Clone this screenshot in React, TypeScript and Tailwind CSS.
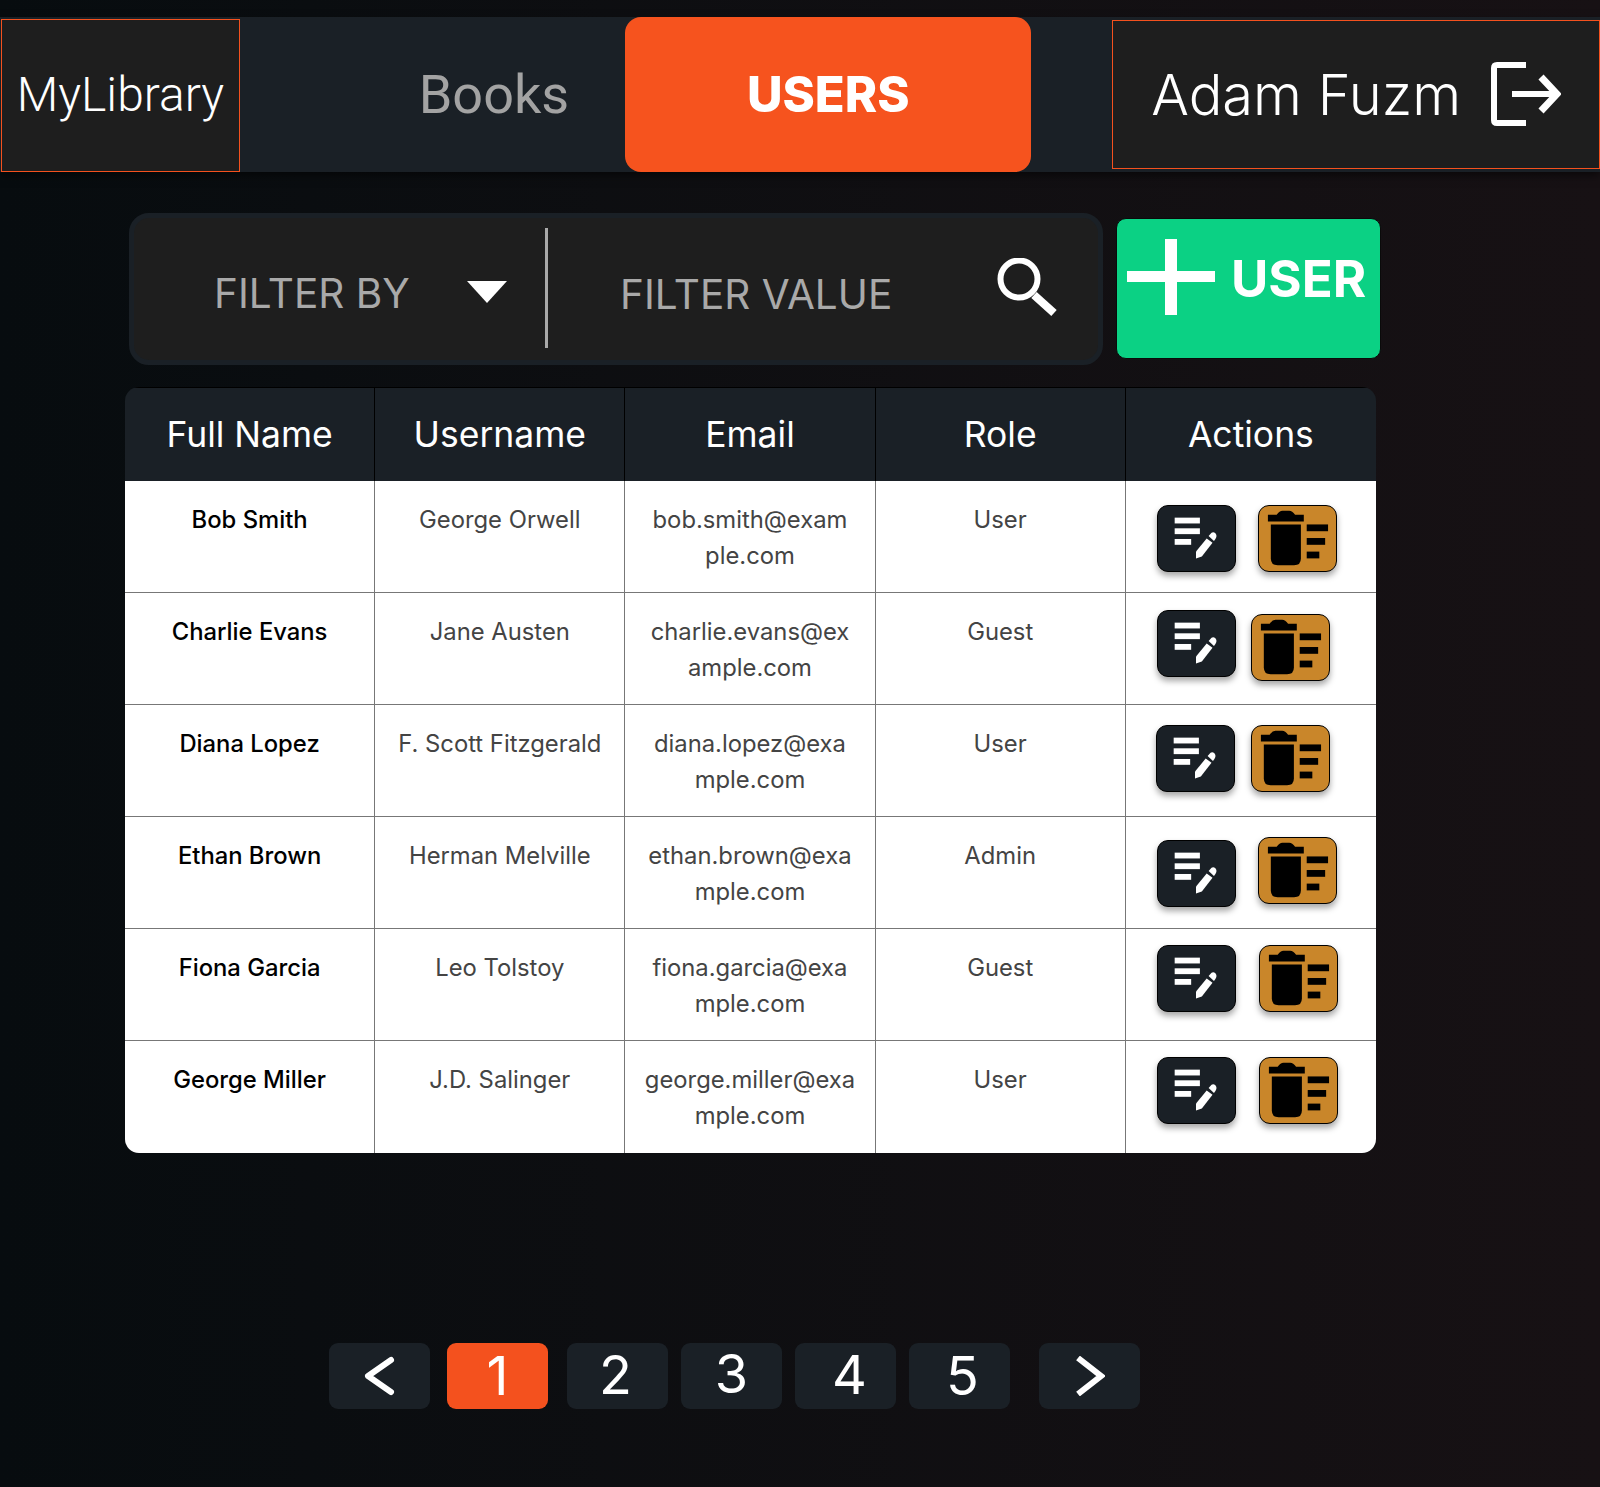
import React from 'react';

const users = [
    { name: 'Bob Smith', username: 'George Orwell', email: ['bob.smith@exam', 'ple.com'], role: 'User', rowClass: 'h-[111px]', editClass: 'mt-[24px] ml-[31px]', deleteClass: 'mt-[24px] ml-[22px]' },
    { name: 'Charlie Evans', username: 'Jane Austen', email: ['charlie.evans@ex', 'ample.com'], role: 'Guest', rowClass: 'h-[112px]', editClass: 'mt-[17px] ml-[31px]', deleteClass: 'mt-[21px] ml-[15px]' },
    { name: 'Diana Lopez', username: 'F. Scott Fitzgerald', email: ['diana.lopez@exa', 'mple.com'], role: 'User', rowClass: 'h-[112px]', editClass: 'mt-[20px] ml-[30px]', deleteClass: 'mt-[20px] ml-[16px]' },
    { name: 'Ethan Brown', username: 'Herman Melville', email: ['ethan.brown@exa', 'mple.com'], role: 'Admin', rowClass: 'h-[112px]', editClass: 'mt-[23px] ml-[31px]', deleteClass: 'mt-[20px] ml-[22px]' },
    { name: 'Fiona Garcia', username: 'Leo Tolstoy', email: ['fiona.garcia@exa', 'mple.com'], role: 'Guest', rowClass: 'h-[112px]', editClass: 'mt-[16px] ml-[31px]', deleteClass: 'mt-[16px] ml-[23px]' },
    { name: 'George Miller', username: 'J.D. Salinger', email: ['george.miller@exa', 'mple.com'], role: 'User', rowClass: 'h-[113px]', editClass: 'mt-[16px] ml-[31px]', deleteClass: 'mt-[16px] ml-[23px]' },
];

const columns = ['Full Name', 'Username', 'Email', 'Role', 'Actions'];

const EditButton = ({ className }: { className: string }) => (
    <button className={`w-[79px] h-[67px] rounded-[11px] bg-[#1a2026] border border-black shadow-[0_4px_6px_rgba(0,0,0,0.35)] shrink-0 ${className}`}>
        <svg viewBox="0 0 79 67" className="w-full h-full">
            <rect x="17" y="12" width="26" height="6" fill="#fff" />
            <rect x="17" y="23" width="26" height="6" fill="#fff" />
            <rect x="17" y="34" width="17" height="6" fill="#fff" />
            <path d="M39 54 L39 47 L50 33.5 L56 38 L45 52 Z" fill="#fff" />
            <path d="M52 31 L55 27.5 Q57 26.5 59 28 L60 30 Q60.5 32 59 34 L57.5 36 Z" fill="#fff" />
        </svg>
    </button>
);

const DeleteButton = ({ className }: { className: string }) => (
    <button className={`w-[79px] h-[67px] rounded-[11px] bg-[#c9862a] border border-black shadow-[0_4px_6px_rgba(0,0,0,0.35)] shrink-0 ${className}`}>
        <svg viewBox="0 0 79 67" className="w-full h-full">
            <path d="M9 9 H18 Q21 5 24 5 H31 Q34 5 37 9 H46 V16 H9 Z" fill="#000" />
            <path d="M12 19 H43 V54 Q43 61 36 61 H19 Q12 61 12 54 Z" fill="#000" />
            <rect x="49" y="19" width="22" height="7" fill="#000" />
            <rect x="49" y="33" width="19" height="7" fill="#000" />
            <rect x="49" y="47" width="13" height="7" fill="#000" />
        </svg>
    </button>
);

const PageButton = ({ className, active, children }: { className?: string; active?: boolean; children: React.ReactNode }) => (
    <button className={`w-[101px] h-[66px] rounded-[9px] flex items-center justify-center text-[54px] leading-none text-white ${active ? 'bg-[#f4511e]' : 'bg-[#1a2026]'} ${className ?? ''}`}>
        {children}
    </button>
);

export default function App() {
    return (
        <div className="w-[1600px] h-[1487px] overflow-hidden bg-gradient-to-r from-[#070c0f] to-[#171114] font-['Inter',sans-serif] pt-[17px]">
            <nav className="flex h-[155px] bg-[#1a2026] shadow-[0_4px_8px_rgba(0,0,0,0.5)]">
                <div className="mt-[2px] ml-[1px] w-[240px] h-[153px] bg-[#1e1e1e] border border-[#f4511e] flex items-center justify-center text-white text-[48px] font-light font-['Roboto',sans-serif] pb-[2px]">
                    MyLibrary
                </div>
                <div className="w-[387px] flex items-center justify-end pr-[56px] text-[54px] font-normal text-[#a3a3a3] font-['Roboto',sans-serif]">
                    Books
                </div>
                <div className="w-[408px] h-[155px] rounded-[16px] bg-[#f6531e] flex items-center justify-center text-white text-[49px] font-extrabold">
                    USERS
                </div>
                <div className="mt-[3px] ml-[81px] w-[490px] h-[149px] bg-[#1e1e1e] border border-[#f4511e] flex items-center pl-[38px] text-white text-[56px] font-light">
                    Adam Fuzm
                    <svg viewBox="0 0 70 64" className="w-[70px] h-[64px] ml-[30px] mb-[1px]" fill="none" stroke="#fff">
                        <path d="M35 3 H6 Q3 3 3 6 V58 Q3 61 6 61 H35" strokeWidth="6" />
                        <path d="M21 32 H66" strokeWidth="6" />
                        <path d="M50 15 L66 32 L50 49" strokeWidth="7" />
                    </svg>
                </div>
            </nav>

            <main className="ml-[125px] w-[1251px]">
                <div className="flex items-start mt-[41px] pl-[4px]">
                    <div className="w-[974px] h-[152px] shrink-0 rounded-[20px] bg-[#1e1e1e] border-[5px] border-[#1a2026] flex items-center">
                        <div className="w-[414px] h-[120px] flex items-center border-r-[3px] border-[#a9a9a9] mb-[3px]">
                            <span className="ml-[80px] mt-[13px] text-[40.5px] text-[#a9a9a9]">FILTER BY</span>
                            <svg viewBox="0 0 40 22" className="w-[40px] h-[22px] ml-[57px] mt-[9px]">
                                <path d="M0 0 H40 L20 22 Z" fill="#fff" />
                            </svg>
                        </div>
                        <span className="ml-[72px] mt-[12px] text-[40.5px] text-[#a9a9a9]">FILTER VALUE</span>
                        <svg viewBox="0 0 62 58" className="w-[62px] h-[58px] ml-[104px] mb-[4px]" fill="none" stroke="#fff">
                            <circle cx="23" cy="21" r="18.5" strokeWidth="6" />
                            <path d="M38 37 L58 55" strokeWidth="8" />
                        </svg>
                    </div>
                    <button className="mt-[5px] ml-[13px] w-[265px] h-[141px] shrink-0 rounded-[10px] bg-[#0bd184] border border-[#0a0a0a] flex items-start pl-[10px] pt-[20px] text-white">
                        <svg viewBox="0 0 88 76" className="w-[88px] h-[76px] shrink-0">
                            <rect x="38" y="0" width="12" height="76" fill="#fff" />
                            <rect x="0" y="32" width="88" height="11" fill="#fff" />
                        </svg>
                        <span className="ml-[16px] mt-[8px] text-[51px] leading-[64px] font-bold">USER</span>
                    </button>
                </div>

                <table className="mt-[22px] w-[1251px] table-fixed border-separate border-spacing-0 rounded-[14px] overflow-hidden">
                    <thead>
                        <tr className="bg-[#1a2026]">
                            {columns.map((col, i) => (
                                <th key={col} className={`h-[94px] text-white text-[35.5px] font-normal text-center border-t border-black ${i < 4 ? 'border-r border-r-black' : ''}`}>{col}</th>
                            ))}
                        </tr>
                    </thead>
                    <tbody className="bg-white">
                        {users.map((user, idx) => (
                            <tr key={user.name}>
                                <td className={`${user.rowClass} align-top px-[20px] pt-[21px] text-center text-[23.8px] leading-[36px] font-[450] text-black border-r border-[#777] ${idx > 0 ? 'border-t' : ''}`}>{user.name}</td>
                                <td className={`align-top px-[20px] pt-[21px] text-center text-[23.8px] leading-[36px] text-[#444] border-r border-[#777] ${idx > 0 ? 'border-t' : ''}`}>{user.username}</td>
                                <td className={`align-top pt-[21px] text-center text-[23.8px] leading-[36px] text-[#444] whitespace-nowrap border-r border-[#777] ${idx > 0 ? 'border-t' : ''}`}>
                                    {user.email[0]}<br />{user.email[1]}
                                </td>
                                <td className={`align-top px-[20px] pt-[21px] text-center text-[23.8px] leading-[36px] text-[#444] border-r border-[#777] ${idx > 0 ? 'border-t' : ''}`}>{user.role}</td>
                                <td className={`align-top border-[#777] ${idx > 0 ? 'border-t' : ''}`}>
                                    <div className="flex items-start">
                                        <EditButton className={user.editClass} />
                                        <DeleteButton className={user.deleteClass} />
                                    </div>
                                </td>
                            </tr>
                        ))}
                    </tbody>
                </table>
            </main>

            <div className="flex ml-[329px] mt-[190px]">
                <PageButton>
                    <svg viewBox="0 0 31 40" className="w-[31px] h-[40px]" fill="none" stroke="#fff" strokeWidth="6" strokeLinecap="round" strokeLinejoin="round">
                        <path d="M27 4 L4 20 L27 36" />
                    </svg>
                </PageButton>
                <PageButton active className="ml-[17px]">1</PageButton>
                <PageButton className="ml-[19px] pr-[4px] pb-[2px]">2</PageButton>
                <PageButton className="ml-[13px] pb-[4px]">3</PageButton>
                <PageButton className="ml-[13px] pl-[8px] pb-[2px]">4</PageButton>
                <PageButton className="ml-[13px] pl-[6px]">5</PageButton>
                <PageButton className="ml-[29px]">
                    <svg viewBox="0 0 30 40" className="w-[30px] h-[40px]" fill="none" stroke="#fff" strokeWidth="6">
                        <path d="M3 2 L26 20 L3 38" />
                    </svg>
                </PageButton>
            </div>
        </div>
    );
}
